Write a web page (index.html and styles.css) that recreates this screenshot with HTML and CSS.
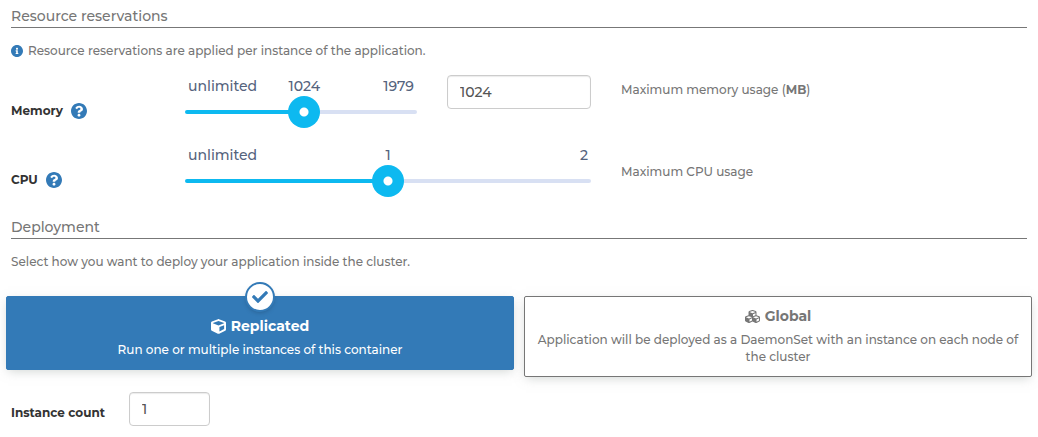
FILE: index.html
```html
<!DOCTYPE html>
<html lang="en">
<head>
<meta charset="utf-8">
<title>Create application</title>
<link rel="stylesheet" href="styles.css">
</head>
<body>
<svg class="sprite" aria-hidden="true">
  <symbol id="info" viewBox="8 8 496 496"><path d="M256 8C119.043 8 8 119.083 8 256c0 136.997 111.043 248 248 248s248-111.003 248-248C504 119.083 392.957 8 256 8zm0 110c23.196 0 42 18.804 42 42s-18.804 42-42 42-42-18.804-42-42 18.804-42 42-42zm56 254c0 6.627-5.373 12-12 12h-88c-6.627 0-12-5.373-12-12v-24c0-6.627 5.373-12 12-12h12v-64h-12c-6.627 0-12-5.373-12-12v-24c0-6.627 5.373-12 12-12h64c6.627 0 12 5.373 12 12v100h12c6.627 0 12 5.373 12 12v24z"/></symbol>
  <symbol id="question" viewBox="8 8 496 496"><path d="M504 256c0 136.997-111.043 248-248 248S8 392.997 8 256C8 119.083 119.043 8 256 8s248 111.083 248 248zM262.655 90c-54.497 0-89.255 22.957-116.549 63.758-3.536 5.286-2.353 12.415 2.715 16.258l34.699 26.31c5.205 3.947 12.621 3.008 16.665-2.122 17.864-22.658 30.113-35.797 57.303-35.797 20.429 0 45.698 13.148 45.698 32.958 0 14.976-12.363 22.667-32.534 33.976C247.128 238.528 216 254.941 216 296v4c0 6.627 5.373 12 12 12h56c6.627 0 12-5.373 12-12v-1.333c0-28.462 83.186-29.647 83.186-106.667 0-58.002-60.165-102-116.531-102zM256 338c-25.365 0-46 20.635-46 46 0 25.364 20.635 46 46 46s46-20.636 46-46c0-25.365-20.635-46-46-46z"/></symbol>
  <symbol id="check" viewBox="0 0 512 512"><path d="M173.898 439.404l-166.4-166.4c-9.997-9.997-9.997-26.206 0-36.204l36.203-36.204c9.997-9.998 26.207-9.998 36.204 0L192 312.69 432.095 72.596c9.997-9.997 26.207-9.997 36.204 0l36.203 36.204c9.997 9.997 9.997 26.206 0 36.204l-294.4 294.401c-9.998 9.997-26.207 9.997-36.204-.001z"/></symbol>
  <symbol id="cube" viewBox="0 0 512 512"><path d="M239.1 6.3l-208 78c-18.7 7-31.1 25-31.1 45v225.1c0 18.2 10.3 34.8 26.5 42.9l208 104c13.5 6.8 29.4 6.8 42.9 0l208-104c16.3-8.1 26.5-24.8 26.5-42.9V129.3c0-20-12.4-37.9-31.1-44.9l-208-78C262 2.2 250 2.2 239.1 6.3zM256 68.4l192 72v1.1l-192 78-192-78v-1.1l192-72zm32 356V275.5l160-65v133.9l-160 80z"/></symbol>
  <symbol id="cubes" viewBox="0 0 512 512"><path d="M488.6 250.2L392 214V105.5c0-15-9.3-28.4-23.4-33.7l-100-37.5c-8.1-3.1-17.1-3.1-25.3 0l-100 37.5c-14.1 5.3-23.4 18.7-23.4 33.7V214l-96.6 36.2C9.3 255.5 0 268.9 0 283.9V394c0 13.6 7.7 26.1 19.9 32.2l100 50c10.1 5.1 22.1 5.1 32.2 0l103.9-52 103.9 52c10.1 5.1 22.1 5.1 32.2 0l100-50c12.2-6.1 19.9-18.6 19.9-32.2V283.9c0-15-9.3-28.4-23.4-33.7zM358 214.8l-85 31.9v-68.2l85-37v73.3zM154 104.1l102-38.2 102 38.2v.6l-102 41.4-102-41.4v-.6zm84 291.1l-85 42.5v-79.1l85-38.8v75.4zm0-112l-102 41.4-102-41.4v-.6l102-38.2 102 38.2v.6zm240 112l-85 42.5v-79.1l85-38.8v75.4zm0-112l-102 41.4-102-41.4v-.6l102-38.2 102 38.2v.6z"/></symbol>
</svg>
<form class="form">
  <h2 class="section-title">Resource reservations</h2>
  <p class="note"><svg class="icon icon-info" aria-hidden="true"><use href="#info"/></svg>Resource reservations are applied per instance of the application.</p>

  <div class="resource">
    <div class="resource-name"><label for="memory">Memory</label><svg class="icon icon-help" aria-hidden="true"><use href="#question"/></svg></div>
    <div class="slider" style="--value: 0.517">
      <div class="slider-labels"><span>unlimited</span><output class="slider-value" for="memory">1024</output><span>1979</span></div>
      <input class="range" id="memory" type="range" min="0" max="1979" value="1024">
    </div>
    <input class="text-box" type="text" value="1024" aria-label="Memory in MB">
    <p class="hint">Maximum memory usage (<b>MB</b>)</p>
  </div>

  <div class="resource">
    <div class="resource-name"><label for="cpu">CPU</label><svg class="icon icon-help" aria-hidden="true"><use href="#question"/></svg></div>
    <div class="slider slider-wide" style="--value: 0.5">
      <div class="slider-labels"><span>unlimited</span><output class="slider-value" for="cpu">1</output><span>2</span></div>
      <input class="range" id="cpu" type="range" min="0" max="2" value="1">
    </div>
    <p class="hint hint-low">Maximum CPU usage</p>
  </div>

  <h2 class="section-title">Deployment</h2>
  <p class="note">Select how you want to deploy your application inside the cluster.</p>

  <div class="options">
    <div class="option">
      <input class="option-radio" type="radio" name="deployment" id="replicated" checked>
      <label class="option-card" for="replicated">
        <span class="option-mark"><svg class="icon icon-check" aria-hidden="true"><use href="#check"/></svg></span>
        <span class="option-title"><svg class="icon icon-title" aria-hidden="true"><use href="#cube"/></svg>Replicated</span>
        <span class="option-text">Run one or multiple instances of this container</span>
      </label>
    </div>
    <div class="option">
      <input class="option-radio" type="radio" name="deployment" id="global">
      <label class="option-card" for="global">
        <span class="option-mark"><svg class="icon icon-check" aria-hidden="true"><use href="#check"/></svg></span>
        <span class="option-title"><svg class="icon icon-title" aria-hidden="true"><use href="#cubes"/></svg>Global</span>
        <span class="option-text">Application will be deployed as a DaemonSet with an instance on each node of the cluster</span>
      </label>
    </div>
  </div>

  <div class="count">
    <label class="count-label" for="count">Instance count</label>
    <input class="text-box text-box-small" id="count" type="text" value="1">
  </div>
</form>
</body>
</html>
```

FILE: styles.css
```css
* { box-sizing: border-box; }

body {
  margin: 0;
  background: #fff;
  color: #767676;
  font: 500 12px/17px Montserrat, Inter, sans-serif;
}

.sprite { position: absolute; width: 0; height: 0; }
.icon { flex: none; fill: currentColor; }
.form { padding: 7px 11px 10px; }

.section-title {
  margin: 0 0 14px;
  padding-bottom: 2px;
  border-bottom: 1px solid #777;
  font-size: 14px;
  font-weight: 500;
  line-height: 18px;
}

.note { display: flex; align-items: center; margin: 0 0 16px; }
.icon-info { width: 12px; height: 12px; margin-right: 5px; color: #337ab7; }

.resource {
  display: grid;
  grid-template-columns: 144fr 232fr 144fr 406fr;
  column-gap: 30px;
  align-items: start;
  height: 69px;
}
.resource-name {
  display: flex;
  align-items: center;
  gap: 8px;
  padding-top: 27px;
  color: #333;
  font-weight: 700;
}
.icon-help { width: 16px; height: 16px; color: #337ab7; }

.slider { position: relative; }
.slider-wide { grid-column: span 2; }
.slider-labels {
  display: flex;
  justify-content: space-between;
  height: 21px;
  padding: 2px 3px 0;
  color: #55637d;
  font-size: 14px;
  line-height: 18px;
}
.slider-value {
  position: absolute;
  left: calc(16px + (100% - 32px) * var(--value));
  transform: translateX(-50%);
}
.range {
  display: block;
  width: 100%;
  height: 32px;
  margin: 0;
  appearance: none;
  background: none;
}
.range::-webkit-slider-runnable-track {
  height: 4px;
  border-radius: 2px;
  background: linear-gradient(to right, #0db9f0 calc(100% * var(--value)), #d8e0f3 0);
}
.range::-webkit-slider-thumb {
  width: 32px;
  height: 32px;
  margin-top: -14px;
  appearance: none;
  border-radius: 50%;
  background: radial-gradient(circle, #fff 4px, #0db9f0 5px);
}

.text-box {
  width: 100%;
  height: 34px;
  padding: 6px 12px;
  border: 1px solid #ccc;
  border-radius: 4px;
  box-shadow: inset 0 1px 1px rgba(0, 0, 0, 0.08);
  background: #fff;
  color: #555;
  font: inherit;
  font-size: 14px;
}
.text-box-small { width: 81px; }
.hint { margin: 0; padding-top: 6px; }
.hint-low { padding-top: 19px; }

.resource + .section-title { margin-top: 5px; }

.options {
  display: grid;
  grid-template-columns: 1fr 1fr;
  gap: 10px;
  align-items: start;
  margin: 26px -5px 15px;
}
.option { position: relative; }
.option-radio { position: absolute; opacity: 0; }
.option-card {
  display: flex;
  flex-direction: column;
  gap: 6px;
  position: relative;
  padding: 10px 10px 11px;
  border: 1px solid #767676;
  border-radius: 2px;
  box-shadow: 0 3px 10px -2px rgba(161, 170, 166, 0.5);
  background: #fff;
  text-align: center;
}
.option-title {
  display: flex;
  align-items: center;
  justify-content: center;
  gap: 5px;
  font-size: 14px;
  font-weight: 700;
  line-height: 18px;
}
.icon-title { width: 15px; height: 15px; }
.option-mark {
  display: none;
  position: absolute;
  top: -15px;
  left: calc(50% - 15px);
  width: 30px;
  height: 30px;
  align-items: center;
  justify-content: center;
  border: 2px solid #337ab7;
  border-radius: 50%;
  background: #fff;
  color: #337ab7;
  box-shadow: 0 2px 5px -2px rgba(0, 0, 0, 0.25);
}
.icon-check { width: 16px; height: 16px; }
.option-radio:checked + .option-card {
  padding-top: 20px;
  border-color: #337ab7;
  background: #337ab7;
  color: #fff;
}
.option-radio:checked + .option-card .option-mark { display: flex; }

.count { display: flex; align-items: center; gap: 24px; color: #333; }
.count-label { padding-top: 6px; font-weight: 700; }
```
